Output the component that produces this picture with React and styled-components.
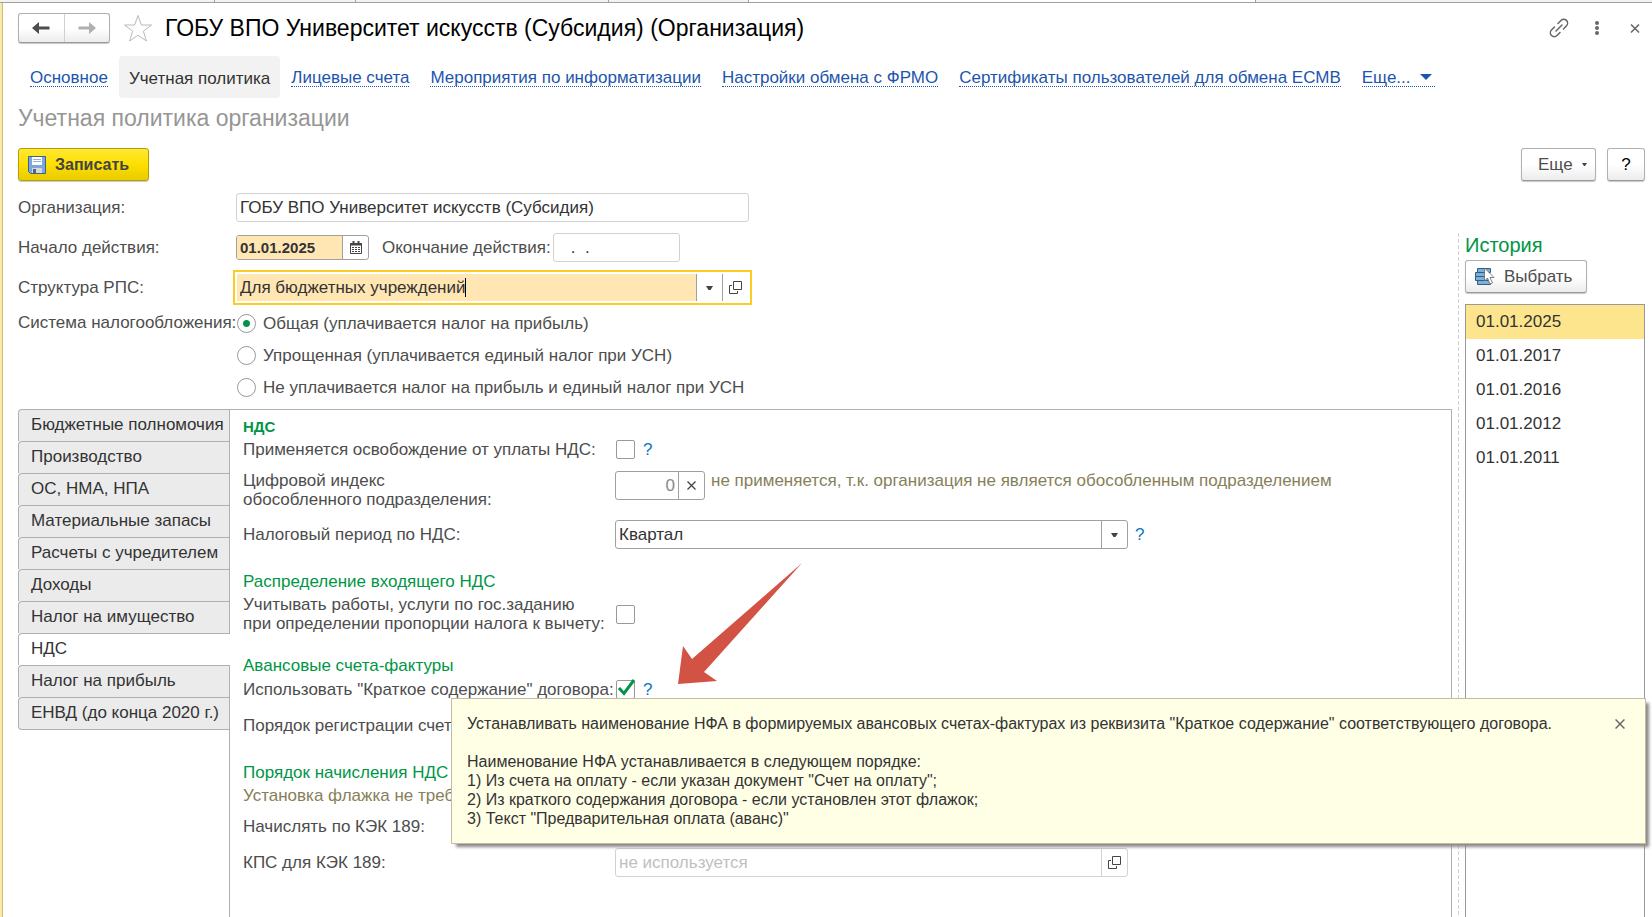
import React, { useState } from "react"
import styled, { createGlobalStyle, css } from "styled-components"

const GlobalStyle = createGlobalStyle`
  * {
    box-sizing: border-box;
  }
  body {
    margin: 0;
    background: #fff;
    color: #4d4d4d;
    font-family: "Liberation Sans", Arial, sans-serif;
    font-size: 17px;
    line-height: 19px;
  }
  button, input, select {
    font: inherit;
    color: inherit;
    margin: 0;
  }
`

const Page = styled.div`
  position: relative;
  display: flex;
  flex-direction: column;
  min-height: 100vh;
  overflow: hidden;
`

const WindowTabs = styled.div`
  display: flex;
  height: 3px;
  background: #f3f3f3;
  border-bottom: 1px solid #a0a0a0;
`

const WindowTab = styled.div`
  width: ${props => props.$width}px;
  border-right: 1px solid #a0a0a0;
  background: ${props => (props.$active ? "#fff" : "transparent")};
`

const Form = styled.main`
  flex: 1;
  display: flex;
  flex-direction: column;
  padding: 10px 7px 0 18px;
  background: linear-gradient(to right, #f9eba5 2px, #cdbc7b 2px 3px, #fff 3px);
`

const Header = styled.header`
  display: flex;
  align-items: center;
  height: 30px;
`

const raised = css`
  border: 1px solid #b0b0b0;
  border-bottom-color: #999;
  border-radius: 3px;
  background: linear-gradient(#fff 50%, #ececec);
  box-shadow: 0 1px 1px #c8c8c8;
`

const History = styled.div`
  ${raised}
  display: flex;
  width: 92px;
  height: 30px;
`

const ArrowButton = styled.button`
  flex: 1;
  display: flex;
  align-items: center;
  justify-content: center;
  padding: 0;
  border: 0;
  background: none;
  color: ${props => (props.disabled ? "#b0b0b0" : "#4d4d4d")};
  & + & {
    border-left: 1px solid #d0d0d0;
  }
`

const PlainButton = styled.button`
  display: flex;
  align-items: center;
  justify-content: center;
  padding: 0;
  border: 0;
  background: none;
  color: #666;
`

const StarButton = styled(PlainButton)`
  width: 30px;
  margin: 0 12px 0 13px;
`

const Title = styled.h1`
  flex: 1;
  margin: 0;
  color: #000;
  font-size: 23px;
  font-weight: normal;
  line-height: 28px;
`

const HeaderTools = styled.div`
  display: flex;
  align-items: center;
  gap: 18px;
  svg {
    display: block;
  }
`

const Nav = styled.nav`
  display: flex;
  gap: 1px;
  margin-top: 13px;
  padding-left: 2px;
`

const NavItem = styled.div`
  display: flex;
  align-items: center;
  height: 42px;
  padding: 2px 10px 0;
  border-radius: 4px;
  background: ${props => (props.$active ? "#f2f2f2" : "none")};
  color: #333;
  white-space: nowrap;
`

const NavLink = styled.a`
  border-bottom: 1px dotted #1d55ad;
  color: #1d55ad;
  line-height: 17px;
  text-decoration: none;
  svg {
    margin: 0 3px 3px 5px;
  }
`

const Subtitle = styled.h2`
  margin: 8px 0 0;
  color: #969696;
  font-size: 23px;
  font-weight: normal;
  line-height: 24px;
`

const Toolbar = styled.div`
  display: flex;
  gap: 11px;
  margin-top: 18px;
`

const Button = styled.button`
  ${raised}
  display: flex;
  align-items: center;
  justify-content: ${props => (props.$left ? "flex-start" : "center")};
  height: 33px;
  width: ${props => props.$width}px;
  padding: 0 0 0 ${props => props.$left || 0}px;
  gap: 9px;
`

const HelpButton = styled(Button)`
  color: #000;
`

const SaveButton = styled(Button)`
  margin-right: auto;
  border-color: #b3a000;
  background: linear-gradient(#ffe736, #fddf00 50%, #eacb00);
  color: #444;
  font-size: 16px;
  font-weight: bold;
`

const Body = styled.div`
  flex: 1;
  display: grid;
  grid-template-columns: minmax(0, 1fr) 187px;
  column-gap: 6px;
  margin-top: 12px;
`

const Main = styled.div`
  display: flex;
  flex-direction: column;
`

const Fields = styled.div`
  display: grid;
  grid-template-columns: 218px 1fr;
  row-gap: 11px;
`

const Label = styled.label`
  line-height: 29px;
  white-space: nowrap;
`

const EndLabel = styled(Label)`
  margin: 0 2px 0 13px;
`

const Inline = styled.div`
  display: flex;
  align-items: center;
  gap: ${props => props.$gap || 0}px;
`

const Field = styled.div`
  display: flex;
  flex: none;
  width: ${props => props.$width || 513}px;
  height: ${props => (props.$low ? 25 : 29)}px;
  border: 1px solid ${props => (props.$muted ? "#d2d2d2" : "#a0a0a0")};
  border-radius: 3px;
  overflow: hidden;
  background: #fff;
  color: #333;
  ${props =>
    props.$focused &&
    css`
      border-color: #fff;
      outline: 2px solid #f9cd22;
      outline-offset: 1px;
      border-radius: 0;
    `}
`

const text = css`
  flex: 1;
  min-width: 0;
  padding: 0 3px;
  border: 0;
  outline: 0;
  background: ${props => (props.$filled ? "#ffe6b3" : "transparent")};
  &::placeholder {
    color: #c0c0c0;
    opacity: 1;
  }
`

const Input = styled.input`
  ${text}
  font-size: ${props => (props.$bold ? 15 : 17)}px;
  font-weight: ${props => (props.$bold ? "bold" : "normal")};
`

const NumberInput = styled(Input)`
  color: #888;
  text-align: right;
`

const Select = styled.select`
  ${text}
  appearance: none;
`

const FieldButton = styled(PlainButton)`
  flex: none;
  width: 26px;
  border-left: 1px solid ${props => (props.$muted ? "#d2d2d2" : "#a0a0a0")};
  color: #444;
`

const TypedValue = styled.span`
  flex: 1;
  display: flex;
  align-items: center;
  min-width: 0;
  background: #ffe6b3;
`

const TypedInput = styled(Input)`
  flex: none;
  field-sizing: content;
  padding-right: 0;
`

const Caret = styled.span`
  width: 1px;
  height: 19px;
  background: #000;
`

const Regimes = styled.div`
  display: grid;
  grid-template-columns: 218px 1fr;
  margin: 5px 0 6px;
`

const RegimesLabel = styled.span`
  line-height: 31px;
  white-space: nowrap;
`

const RadioLabel = styled.label`
  display: flex;
  align-items: center;
  gap: 7px;
  height: 32px;
  padding-left: 1px;
`

const Radio = styled.input`
  appearance: none;
  width: 19px;
  height: 19px;
  border: 1px solid #999;
  border-radius: 50%;
  &:checked {
    background: radial-gradient(circle, #009646 3px, #fff 4px);
  }
`

const Sections = styled.div`
  flex: 1;
  display: flex;
`

const TabList = styled.div`
  width: 211px;
`

const Tab = styled.button`
  position: relative;
  display: block;
  width: ${props => (props.$active ? 212 : 211)}px;
  height: 32px;
  padding: 0 0 2px 12px;
  border: solid #b0b0b0;
  border-width: 1px 0 0 1px;
  border-radius: 4px 0 0 0;
  background: ${props => (props.$active ? "#fff" : "#ebebeb")};
  color: #333;
  text-align: left;
  white-space: nowrap;
  &:last-child {
    height: 33px;
    border-bottom-width: 1px;
    border-radius: 4px 0 0 4px;
  }
`

const Panel = styled.section`
  flex: 1;
  min-width: 0;
  padding: 7px 0 0 13px;
  border: solid #b0b0b0;
  border-width: 1px 1px 0;
`

const GroupTitle = styled.h3`
  margin: ${props => (props.$first ? 0 : 23)}px 0 0;
  color: #009646;
  font-size: ${props => (props.$first ? 15 : 17)}px;
  font-weight: ${props => (props.$first ? "bold" : "normal")};
  line-height: 20px;
`

const Row = styled.div`
  display: grid;
  grid-template-columns: 372px 1fr;
  align-items: ${props => props.$align || "center"};
  min-height: ${props => (props.$field ? 29 : 20)}px;
  margin-top: ${props => props.$top}px;
  white-space: nowrap;
`

const Check = styled.input`
  appearance: none;
  width: 19px;
  height: 19px;
  margin: 0 1px;
  border: 1px solid #999;
  border-radius: 2px;
  background: #fff;
`

const CheckBox = styled.span`
  display: grid;
  width: 21px;
  svg,
  ${Check} {
    grid-area: 1 / 1;
  }
  svg {
    z-index: 1;
    pointer-events: none;
  }
`

const Help = styled.button`
  padding: 0;
  border: 0;
  background: none;
  color: #0f76bd;
`

const IndexHint = styled.span`
  align-self: flex-start;
  color: #878059;
`

const HintLine = styled.p`
  margin: 3px 0 0;
  color: #878059;
`

const Aside = styled.aside`
  display: flex;
  flex-direction: column;
  align-items: flex-start;
  margin-top: 40px;
  padding-left: 7px;
  background: repeating-linear-gradient(#d2d2d2 0 4px, transparent 4px 6px) left / 1px 100% no-repeat;
`

const AsideTitle = styled.h2`
  margin: 0 0 3px;
  color: #009646;
  font-size: 20px;
  font-weight: normal;
  line-height: 24px;
`

const Dates = styled.ul`
  flex: 1;
  align-self: stretch;
  margin: 11px 0 0;
  padding: 0;
  border: solid #999;
  border-width: 1px 1px 0;
  list-style: none;
`

const DateItem = styled.li`
  padding-left: 10px;
  background: ${props => (props.$active ? "#fde58e" : "none")};
  color: #333;
  line-height: 34px;
`

const Tip = styled.div`
  position: absolute;
  top: 698px;
  left: 451px;
  right: 6px;
  display: flex;
  justify-content: space-between;
  align-items: flex-start;
  height: 146px;
  padding: 15px 20px 0 15px;
  border: 1px solid #c4bba3;
  background: #ffffe6;
  box-shadow: 4px 4px 3px -1px #8a8a8a;
  color: #333;
  font-size: 16px;
  white-space: pre-line;
`

const TipClose = styled(PlainButton)`
  height: 19px;
`

const Pointer = styled.svg`
  position: absolute;
  top: 563px;
  left: 678px;
`

const Cross = ({ size = 9 }) => (
  <svg width={size} height={size} viewBox="0 0 9 9" stroke="currentColor" strokeWidth="1.3">
    <path d="M.5.5l8 8M8.5.5l-8 8" />
  </svg>
)

const Down = () => (
  <svg width="7" height="4" fill="currentColor">
    <path d="M0 0h7L4.500 4h-2z" />
  </svg>
)

const Open = () => (
  <svg width="13" height="13" fill="none" stroke="currentColor">
    <path d="M4.500.5h8v8h-8zM3 4.500H.5v8h8V10" />
  </svg>
)

const Arrow = ({ flip }) => (
  <svg width="18" height="12" viewBox="0 0 18 12">
    <path
      d="M0 6l7-6v4.400h10.500v3.200H7V12z"
      fill="currentColor"
      transform={flip ? "rotate(180 9 6)" : undefined}
    />
  </svg>
)

const Calendar = () => (
  <svg width="12" height="13" fill="none" stroke="#444">
    <path d="M.5 2.500h11v10H.5z" />
    <path d="M0 3.500h12M3.500 0v4M8.500 0v4" strokeWidth="2" />
    <path d="M2 6.500h8M2 8.500h8M2 10.500h8" strokeDasharray="2 1" />
  </svg>
)

const Disk = () => (
  <svg width="18" height="18">
    <path d="M.5.5h17v17h-15l-2-2z" fill="#7da7d9" stroke="#3b638c" />
    <path d="M4 1h10v8H4z" fill="#fff" />
    <path d="M5 3.500h8M5 5.500h8" stroke="#9bb0c8" />
    <path d="M4 12h10v5H4z" fill="#d5d8dc" />
    <path d="M5 13h3v4H5z" fill="#55657a" />
  </svg>
)

const Pick = () => (
  <svg width="20" height="18">
    <path d="M2.500.5h13v4h-13zM.5 4.500h13v4H.5zM.5 8.500h13v4H.5zM2.500 12.500h13v4h-13z" fill="#7eb0d6" stroke="#2f5f88" />
    <path d="M9.500 0v13l3-3 2.500 6 2.500-1-2.500-5.500h4z" fill="#fff" stroke="#666" strokeWidth=".8" />
  </svg>
)

const tabs = [
  "Бюджетные полномочия",
  "Производство",
  "ОС, НМА, НПА",
  "Материальные запасы",
  "Расчеты с учредителем",
  "Доходы",
  "Налог на имущество",
  "НДС",
  "Налог на прибыль",
  "ЕНВД (до конца 2020 г.)",
]

const links = [
  "Основное",
  "Учетная политика",
  "Лицевые счета",
  "Мероприятия по информатизации",
  "Настройки обмена с ФРМО",
  "Сертификаты пользователей для обмена ЕСМВ",
]

const regimes = [
  "Общая (уплачивается налог на прибыль)",
  "Упрощенная (уплачивается единый налог при УСН)",
  "Не уплачивается налог на прибыль и единый налог при УСН",
]

const dates = ["01.01.2025", "01.01.2017", "01.01.2016", "01.01.2012", "01.01.2011"]

const emptyDate = "\u00a0\u00a0\u00a0.\u00a0\u00a0."

const tipText = `Устанавливать наименование НФА в формируемых авансовых счетах-фактурах из реквизита "Краткое содержание" соответствующего договора.

Наименование НФА устанавливается в следующем порядке:
1) Из счета на оплату - если указан документ "Счет на оплату";
2) Из краткого содержания договора - если установлен этот флажок;
3) Текст "Предварительная оплата (аванс)"`

const CheckField = ({ id, checked, onChange }) => (
  <CheckBox>
    <Check type="checkbox" id={id} checked={checked} onChange={onChange} />
    {checked && (
      <svg width="21" height="19" overflow="visible" fill="none" stroke="#009646" strokeWidth="3">
        <path d="M4 8l5 5.500L19 0" />
      </svg>
    )}
  </CheckBox>
)

const App = () => {
  const [tab, setTab] = useState("НДС")
  const [regime, setRegime] = useState(0)
  const [checks, setChecks] = useState({ exempt: false, works: false, brief: true })
  const [tip, setTip] = useState(true)
  const toggle = key => () => setChecks({ ...checks, [key]: !checks[key] })

  return (
    <Page>
      <GlobalStyle />
      <WindowTabs>
        <WindowTab $width={215} />
        <WindowTab $width={141} />
        <WindowTab $width={253} />
        <WindowTab $width={140} />
        <WindowTab $width={507} $active />
      </WindowTabs>
      <Form>
        <Header>
          <History>
            <ArrowButton aria-label="Назад">
              <Arrow />
            </ArrowButton>
            <ArrowButton aria-label="Вперед" disabled>
              <Arrow flip />
            </ArrowButton>
          </History>
          <StarButton aria-label="В избранное">
            <svg width="30" height="29" viewBox="0 0 30 29" fill="none" stroke="#b5bac0">
              <path d="M15 1.500l3.400 9.500h10.100l-8.100 6.200 3 9.800L15 21.200 6.600 27l3-9.800L1.500 11h10.100z" />
            </svg>
          </StarButton>
          <Title>ГОБУ ВПО Университет искусств (Субсидия) (Организация)</Title>
          <HeaderTools>
            <PlainButton aria-label="Ссылка">
              <svg width="20" height="20" viewBox="0 0 20 20" fill="none" stroke="currentColor" strokeWidth="1.5" strokeLinecap="round">
                <path d="M7 13l6-6M9 5.500l3-3a3.700 3.700 0 0 1 5.500 5.300l-3 3.200M5.500 9l-3 3a3.700 3.700 0 0 0 5.500 5.500l3-3" />
              </svg>
            </PlainButton>
            <PlainButton aria-label="Меню">
              <svg width="20" height="16" fill="currentColor">
                <circle cx="10" cy="3" r="2" />
                <circle cx="10" cy="8" r="2" />
                <circle cx="10" cy="13" r="2" />
              </svg>
            </PlainButton>
            <PlainButton aria-label="Закрыть">
              <svg width="20" height="9" stroke="currentColor" strokeWidth="1.5">
                <path d="M6 .5l8 8M14 .5l-8 8" />
              </svg>
            </PlainButton>
          </HeaderTools>
        </Header>
        <Nav>
          {links.map((name, i) => (
            <NavItem key={name} $active={i === 1}>
              {i === 1 ? name : <NavLink href="#">{name}</NavLink>}
            </NavItem>
          ))}
          <NavItem>
            <NavLink href="#">
              Еще...{" "}
              <svg width="12" height="6" fill="#1d55ad">
                <path d="M0 0h12L6 6z" />
              </svg>
            </NavLink>
          </NavItem>
        </Nav>
        <Subtitle>Учетная политика организации</Subtitle>
        <Toolbar>
          <SaveButton $width={131} $left={9}>
            <Disk />
            Записать
          </SaveButton>
          <Button $width={75} $left={16}>
            Еще
            <svg width="5" height="3" fill="#444">
              <path d="M0 0h5L3 3H2z" />
            </svg>
          </Button>
          <HelpButton $width={38}>?</HelpButton>
        </Toolbar>
        <Body>
          <Main>
            <Fields>
              <Label htmlFor="org">Организация:</Label>
              <Field $muted>
                <Input id="org" readOnly value="ГОБУ ВПО Университет искусств (Субсидия)" />
              </Field>
              <Label htmlFor="from">Начало действия:</Label>
              <Inline>
                <Field $width={133} $low>
                  <Input id="from" defaultValue="01.01.2025" $filled $bold />
                  <FieldButton aria-label="Календарь">
                    <Calendar />
                  </FieldButton>
                </Field>
                <EndLabel htmlFor="to">Окончание действия:</EndLabel>
                <Field $width={127} $muted>
                  <Input id="to" readOnly value={emptyDate} />
                </Field>
              </Inline>
              <Label htmlFor="structure">Структура РПС:</Label>
              <Field $focused>
                <TypedValue>
                  <TypedInput id="structure" defaultValue="Для бюджетных учреждений" />
                  <Caret />
                </TypedValue>
                <FieldButton aria-label="Список">
                  <Down />
                </FieldButton>
                <FieldButton aria-label="Открыть">
                  <Open />
                </FieldButton>
              </Field>
            </Fields>
            <Regimes role="radiogroup" aria-labelledby="regimes">
              <RegimesLabel id="regimes">Система налогообложения:</RegimesLabel>
              <div>
                {regimes.map((name, i) => (
                  <RadioLabel key={name}>
                    <Radio type="radio" name="regime" checked={regime === i} onChange={() => setRegime(i)} />
                    {name}
                  </RadioLabel>
                ))}
              </div>
            </Regimes>
            <Sections>
              <TabList role="tablist">
                {tabs.map(name => (
                  <Tab key={name} role="tab" aria-selected={tab === name} $active={tab === name} onClick={() => setTab(name)}>
                    {name}
                  </Tab>
                ))}
              </TabList>
              <Panel>
                <GroupTitle $first>НДС</GroupTitle>
                <Row $top={2}>
                  <label htmlFor="exempt">Применяется освобождение от уплаты НДС:</label>
                  <Inline $gap={7}>
                    <CheckField id="exempt" checked={checks.exempt} onChange={toggle("exempt")} />
                    <Help>?</Help>
                  </Inline>
                </Row>
                <Row $top={12} $align="start">
                  <label htmlFor="index">
                    Цифровой индекс
                    <br />
                    обособленного подразделения:
                  </label>
                  <Inline $gap={6}>
                    <Field $width={90}>
                      <NumberInput id="index" defaultValue="0" />
                      <FieldButton aria-label="Очистить">
                        <Cross />
                      </FieldButton>
                    </Field>
                    <IndexHint>не применяется, т.к. организация не является обособленным подразделением</IndexHint>
                  </Inline>
                </Row>
                <Row $top={11} $field>
                  <label htmlFor="period">Налоговый период по НДС:</label>
                  <Inline $gap={7}>
                    <Field>
                      <Select id="period">
                        <option>Квартал</option>
                      </Select>
                      <FieldButton as="span">
                        <Down />
                      </FieldButton>
                    </Field>
                    <Help>?</Help>
                  </Inline>
                </Row>
                <GroupTitle>Распределение входящего НДС</GroupTitle>
                <Row $top={3}>
                  <label htmlFor="works">
                    Учитывать работы, услуги по гос.заданию
                    <br />
                    при определении пропорции налога к вычету:
                  </label>
                  <CheckField id="works" checked={checks.works} onChange={toggle("works")} />
                </Row>
                <GroupTitle>Авансовые счета-фактуры</GroupTitle>
                <Row $top={3}>
                  <label htmlFor="brief">Использовать "Краткое содержание" договора:</label>
                  <Inline $gap={7}>
                    <CheckField id="brief" checked={checks.brief} onChange={toggle("brief")} />
                    <Help onClick={() => setTip(!tip)}>?</Help>
                  </Inline>
                </Row>
                <Row $top={12} $field>
                  <span>Порядок регистрации счетов</span>
                </Row>
                <GroupTitle>Порядок начисления НДС п</GroupTitle>
                <HintLine>Установка флажка не требу</HintLine>
                <Row $top={11}>
                  <span>Начислять по КЭК 189:</span>
                </Row>
                <Row $top={12} $field>
                  <label htmlFor="kps">КПС для КЭК 189:</label>
                  <Field $muted>
                    <Input id="kps" placeholder="не используется" />
                    <FieldButton $muted aria-label="Открыть">
                      <Open />
                    </FieldButton>
                  </Field>
                </Row>
              </Panel>
            </Sections>
          </Main>
          <Aside>
            <AsideTitle>История</AsideTitle>
            <Button $width={122} $left={9}>
              <Pick />
              Выбрать
            </Button>
            <Dates>
              {dates.map((date, i) => (
                <DateItem key={date} $active={i === 0}>
                  {date}
                </DateItem>
              ))}
            </Dates>
          </Aside>
        </Body>
      </Form>
      <Pointer width="126" height="122" fill="#d25244">
        <path d="M0 121L5 83l9 13L124 0 26 109l13 9z" />
      </Pointer>
      {tip && (
        <Tip role="tooltip">
          {tipText}
          <TipClose aria-label="Закрыть подсказку" onClick={() => setTip(false)}>
            <Cross size={10} />
          </TipClose>
        </Tip>
      )}
    </Page>
  )
}

export default App
